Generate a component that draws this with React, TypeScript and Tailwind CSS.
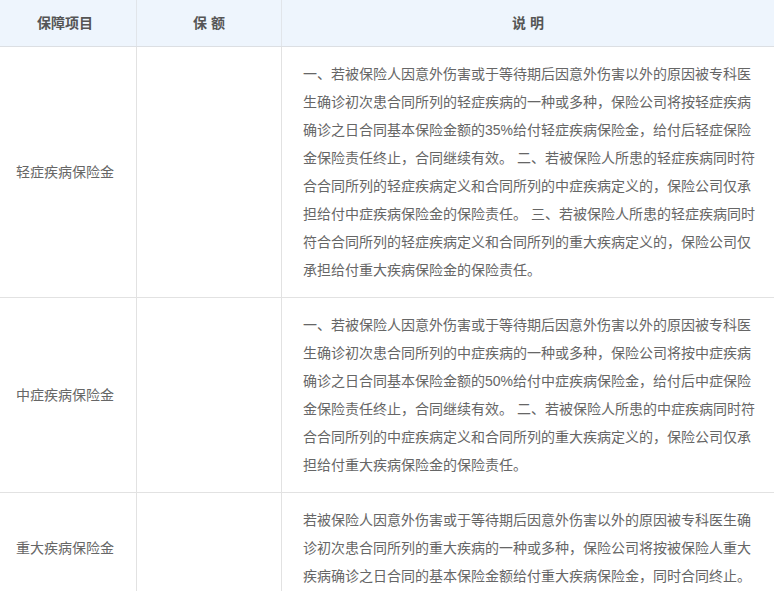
import React from "react";

const rows = [
  {
    name: "轻症疾病保险金",
    amount: "",
    desc: "一、若被保险人因意外伤害或于等待期后因意外伤害以外的原因被专科医生确诊初次患合同所列的轻症疾病的一种或多种，保险公司将按轻症疾病确诊之日合同基本保险金额的35%给付轻症疾病保险金，给付后轻症保险金保险责任终止，合同继续有效。 二、若被保险人所患的轻症疾病同时符合合同所列的轻症疾病定义和合同所列的中症疾病定义的，保险公司仅承担给付中症疾病保险金的保险责任。 三、若被保险人所患的轻症疾病同时符合合同所列的轻症疾病定义和合同所列的重大疾病定义的，保险公司仅承担给付重大疾病保险金的保险责任。",
  },
  {
    name: "中症疾病保险金",
    amount: "",
    desc: "一、若被保险人因意外伤害或于等待期后因意外伤害以外的原因被专科医生确诊初次患合同所列的中症疾病的一种或多种，保险公司将按中症疾病确诊之日合同基本保险金额的50%给付中症疾病保险金，给付后中症保险金保险责任终止，合同继续有效。 二、若被保险人所患的中症疾病同时符合合同所列的中症疾病定义和合同所列的重大疾病定义的，保险公司仅承担给付重大疾病保险金的保险责任。",
  },
  {
    name: "重大疾病保险金",
    amount: "",
    desc: "若被保险人因意外伤害或于等待期后因意外伤害以外的原因被专科医生确诊初次患合同所列的重大疾病的一种或多种，保险公司将按被保险人重大疾病确诊之日合同的基本保险金额给付重大疾病保险金，同时合同终止。",
  },
];

const font = { fontFamily: '"Liberation Sans", "Noto Sans CJK SC", sans-serif' };

export default function App() {
  return (
    <div className="w-[774px] bg-white text-[14px] text-[#666]" style={font}>
      {/* header */}
      <div className="grid grid-cols-[137px_145px_492px] h-[47px] bg-[#eef5fd] border-b border-[#dcdfe3] font-bold text-[#555]">
        <div className="flex items-center justify-center pr-[6px] border-r border-[#e1e5ea]">保障项目</div>
        <div className="flex items-center justify-center border-r border-[#e1e5ea]">保 额</div>
        <div className="flex items-center justify-center">说 明</div>
      </div>

      {rows.map((r) => (
        <div key={r.name} className="grid grid-cols-[137px_145px_492px] border-b border-[#e2e2e2]">
          <div className="flex items-center pl-[16px] border-r border-[#e2e2e2]">{r.name}</div>
          <div className="flex items-center justify-center border-r border-[#e2e2e2]">{r.amount}</div>
          <div className="pl-[21px] py-[13px]">
            <p className="w-[455px] leading-[28px] break-all">{r.desc}</p>
          </div>
        </div>
      ))}
    </div>
  );
}
